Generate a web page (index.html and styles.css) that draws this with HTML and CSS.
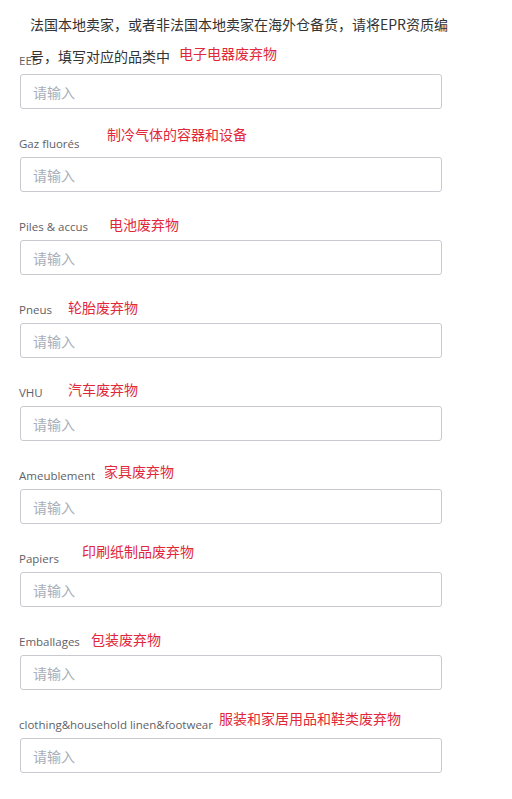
FILE: index.html
```html
<!DOCTYPE html>
<html lang="zh-CN">
<head>
<meta charset="utf-8">
<title>EPR</title>
<link rel="stylesheet" href="styles.css">
</head>
<body>
<div class="page">
  <p class="intro">法国本地卖家，或者非法国本地卖家在海外仓备货，请将EPR资质编号，填写对应的品类中</p>
  <form class="form">
    <div class="item item-1">
      <div class="label-row"><span class="label">EEE</span><span class="tip">电子电器废弃物</span></div>
      <input class="field" type="text" placeholder="请输入">
    </div>
    <div class="item item-2">
      <div class="label-row"><span class="label">Gaz fluorés</span><span class="tip">制冷气体的容器和设备</span></div>
      <input class="field" type="text" placeholder="请输入">
    </div>
    <div class="item item-3">
      <div class="label-row"><span class="label">Piles &amp; accus</span><span class="tip">电池废弃物</span></div>
      <input class="field" type="text" placeholder="请输入">
    </div>
    <div class="item item-4">
      <div class="label-row"><span class="label">Pneus</span><span class="tip">轮胎废弃物</span></div>
      <input class="field" type="text" placeholder="请输入">
    </div>
    <div class="item item-5">
      <div class="label-row"><span class="label">VHU</span><span class="tip">汽车废弃物</span></div>
      <input class="field" type="text" placeholder="请输入">
    </div>
    <div class="item item-6">
      <div class="label-row"><span class="label">Ameublement</span><span class="tip">家具废弃物</span></div>
      <input class="field" type="text" placeholder="请输入">
    </div>
    <div class="item item-7">
      <div class="label-row"><span class="label">Papiers</span><span class="tip">印刷纸制品废弃物</span></div>
      <input class="field" type="text" placeholder="请输入">
    </div>
    <div class="item item-8">
      <div class="label-row"><span class="label">Emballages</span><span class="tip">包装废弃物</span></div>
      <input class="field" type="text" placeholder="请输入">
    </div>
    <div class="item item-9">
      <div class="label-row"><span class="label">clothing&amp;household linen&amp;footwear</span><span class="tip">服装和家居用品和鞋类废弃物</span></div>
      <input class="field" type="text" placeholder="请输入">
    </div>
  </form>
</div>
</body>
</html>
```

FILE: styles.css
```css
* { box-sizing: border-box; }

html, body {
  margin: 0;
  padding: 0;
  background: #ffffff;
}

.page {
  position: relative;
  padding: 26px 0 0 20px;
  font-family: "Noto Sans CJK SC", sans-serif;
}

.intro {
  position: absolute;
  top: 8px;
  left: 30px;
  width: 420px;
  margin: 0;
  font-size: 14px;
  line-height: 32px;
  color: #333333;
}

.form {
  display: flex;
  flex-direction: column;
}

.item {
  display: flex;
  flex-direction: column;
}

.label-row {
  height: 48px;
  display: grid;
  align-items: end;
  padding-bottom: 4px;
}

.label,
.tip {
  grid-area: 1 / 1;
  white-space: nowrap;
}

.label {
  margin-left: -1px;
  font-family: "Open Sans", "Noto Sans CJK SC", sans-serif;
  font-size: 11.5px;
  line-height: 18px;
  color: #5f6166;
}

.tip {
  font-size: 14px;
  line-height: 18px;
  color: #e0283a;
}

.item-1 .tip { margin-left: 159px; margin-bottom: 8px; }
.item-2 .tip { margin-left: 87px;  margin-bottom: 10px; }
.item-3 .tip { margin-left: 89px;  margin-bottom: 3px; }
.item-4 .tip { margin-left: 48px;  margin-bottom: 3px; }
.item-5 .tip { margin-left: 48px;  margin-bottom: 4px; }
.item-6 .tip { margin-left: 84px;  margin-bottom: 5px; }
.item-7 .tip { margin-left: 62px;  margin-bottom: 8px; }
.item-8 .tip { margin-left: 71px;  margin-bottom: 3px; }
.item-9 .tip { margin-left: 199px; margin-bottom: 7px; }

.field {
  display: block;
  width: 422px;
  height: 35px;
  margin: 0;
  padding: 0 12px;
  border: 1px solid #c8cacf;
  border-radius: 3px;
  background: #ffffff;
  font-family: "Noto Sans CJK SC", sans-serif;
  font-size: 14px;
  color: #333333;
  outline: none;
}

.field::placeholder {
  color: #a8aeb8;
}
```
